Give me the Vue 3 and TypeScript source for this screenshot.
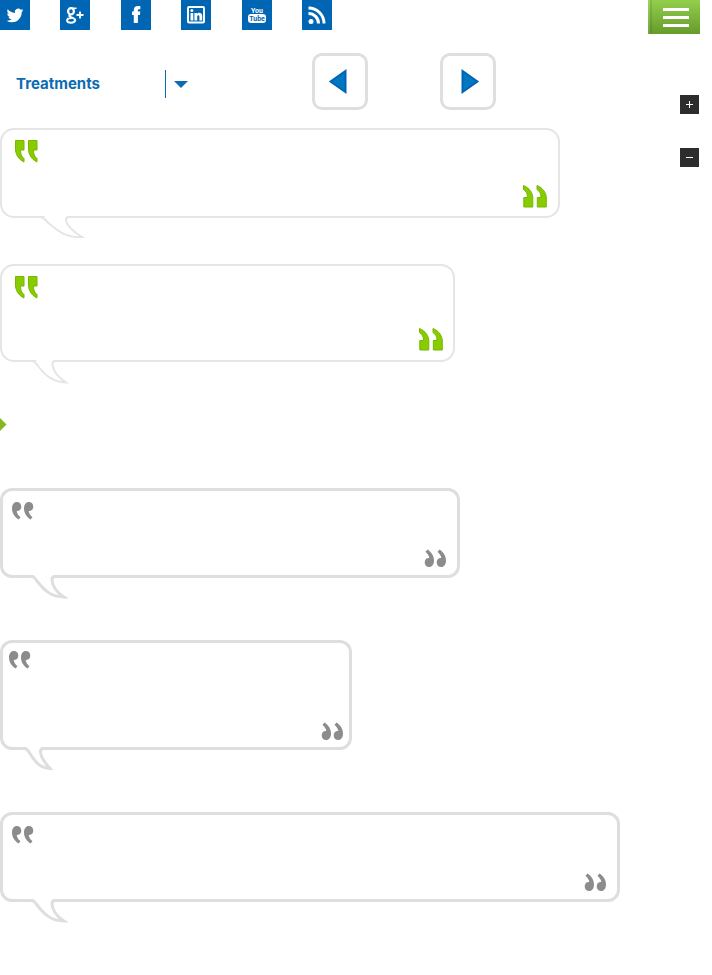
<script setup lang="ts">
import { ref } from 'vue'

interface Bubble {
  id: number
  tone: 'green' | 'grey'
  size: string
  tail: { view: string; width: number; gap: string; line: string }
}

const wideTail = {
  view: '0 0 46 26',
  width: 46,
  gap: 'M3 0H27V4H6Z',
  line: 'M0 3C4 3 5 6 9 9.500C18 17 26 24 42 23C33 18 26 10 26 6Q26 3 29 3'
}
const tail = {
  view: '0 0 38 26',
  width: 38,
  gap: 'M3 0H22V5H6Z',
  line: 'M-1 3C3 3 4 5 6 8C13 17 20 24 34 24.500C26 19 20.500 12 20.500 6Q20.500 3 23.500 3'
}
const greyTail = {
  view: '0 0 38 26',
  width: 38,
  gap: 'M3 0H23V5H6Z',
  line: 'M0 2.500C4 2.500 5 4 7 7C14 16 21 23 34 23C26 18 22 11 22 5.500Q22 2.500 25 2.500'
}
const smallTail = {
  view: '0 0 30 26',
  width: 30,
  gap: 'M2 0H17V5H5Z',
  line: 'M-1 2.500C3 2.500 4 4 5 6C11 16 16 22 26 22.500C21 17 16.500 11 16.500 5.500Q16.500 2.500 19.500 2.500'
}

const featured: Bubble[] = [
  { id: 1, tone: 'green', size: 'large', tail: wideTail },
  { id: 2, tone: 'green', size: 'medium', tail: tail }
]
const quotes: Bubble[] = [
  { id: 3, tone: 'grey', size: 'regular', tail: greyTail },
  { id: 4, tone: 'grey', size: 'small', tail: smallTail },
  { id: 5, tone: 'grey', size: 'full', tail: greyTail }
]
const groups = [featured, quotes]
const category = ref('Treatments')
</script>

<template>
  <div class="page">
    <main class="main">
      <nav class="social" aria-label="Social">
        <a href="#" aria-label="Twitter">
          <svg viewBox="0 0 30 30"><path transform="translate(6.600 7.100) scale(.7)" d="M23.954 4.569a10 10 0 0 1-2.825.775 4.958 4.958 0 0 0 2.163-2.723c-.951.555-2.005.959-3.127 1.184a4.92 4.92 0 0 0-8.384 4.482C7.691 8.094 4.066 6.13 1.64 3.161a4.822 4.822 0 0 0-.666 2.475c0 1.71.87 3.213 2.188 4.096a4.904 4.904 0 0 1-2.228-.616v.061a4.923 4.923 0 0 0 3.946 4.827 4.996 4.996 0 0 1-2.212.085 4.937 4.937 0 0 0 4.604 3.417 9.868 9.868 0 0 1-6.102 2.105c-.39 0-.779-.023-1.17-.067a13.995 13.995 0 0 0 7.557 2.209c9.054 0 13.999-7.496 13.999-13.986 0-.209 0-.42-.015-.63a9.936 9.936 0 0 0 2.46-2.548z" /></svg>
        </a>
        <a href="#" aria-label="Google Plus">
          <svg viewBox="0 0 30 30">
            <g class="line">
              <ellipse cx="11" cy="11.300" rx="2.900" ry="3.200" stroke-width="2.200" />
              <path d="M11 8.200H16.500M13 9.800L14.500 8" stroke-width="1.600" />
              <path d="M10.500 14.600C8.500 15.500 9 16.500 11 17.200C14 18.200 15.400 18.700 15.200 20.200C15 22 13 22.700 11 22.700C8.500 22.700 6.900 21.800 7.100 20.300C7.300 18.800 9 18 11.500 18" stroke-width="2" />
              <path d="M16.500 15H23.500M20 11.500V18.500" stroke-width="1.800" />
            </g>
          </svg>
        </a>
        <a href="#" aria-label="Facebook">
          <svg viewBox="0 0 30 30"><path d="M12.800 23V15H11V11.500H12.800V10C12.800 7.300 14.300 6 17 6H19.300V9.300H18C17.100 9.300 16.900 9.700 16.900 10.500V11.500H19.300L19 15H16.900V23Z" /></svg>
        </a>
        <a href="#" aria-label="LinkedIn">
          <svg viewBox="0 0 30 30">
            <rect class="line" x="7" y="7" width="16" height="15.500" rx="1" stroke-width="2" />
            <circle cx="10.900" cy="10.600" r="1.500" />
            <path d="M9.500 12.900H12.300V20.500H9.500ZM13.400 12.900H16V14C17 12.300 21.200 12.100 21.200 16V20.500H18.400V16.700C18.400 14.700 16.200 14.700 16.200 16.700V20.500H13.400Z" />
          </svg>
        </a>
        <a href="#" aria-label="YouTube">
          <svg viewBox="0 0 30 30">
            <text class="tube" x="15" y="13" text-anchor="middle">You</text>
            <rect x="6" y="14" width="18" height="9" rx="3" />
            <text class="tube tube-blue" x="15" y="21" text-anchor="middle">Tube</text>
          </svg>
        </a>
        <a href="#" aria-label="RSS">
          <svg viewBox="0 0 30 30">
            <circle cx="9" cy="21.500" r="2.500" />
            <path class="line" d="M6.500 13.500A10 10 0 0 1 16.500 23.500M6.500 8A15.500 15.500 0 0 1 22 23.500" stroke-width="3" />
          </svg>
        </a>
      </nav>

      <div class="toolbar">
        <div class="picker">
          <select v-model="category" aria-label="Category">
            <option>Treatments</option>
          </select>
          <svg class="caret" viewBox="0 0 14 7"><path d="M0 0H14L7 7Z" /></svg>
        </div>
        <button class="step prev" type="button" aria-label="Previous">
          <svg viewBox="0 0 20 27"><path d="M2.500 13.500L17.500 3V24Z" /></svg>
        </button>
        <button class="step next" type="button" aria-label="Next">
          <svg viewBox="0 0 20 27"><path d="M17.500 13.500L2.500 3V24Z" /></svg>
        </button>
      </div>

      <template v-for="(group, index) in groups" :key="index">
        <svg v-if="index === 1" class="marker" viewBox="0 0 7 13"><path d="M0 0L6.500 6.500L0 13Z" /></svg>
        <blockquote v-for="b in group" :key="b.id" class="bubble" :class="[b.tone, b.size]">
          <svg v-if="b.tone === 'green'" class="mark" viewBox="0 0 24 24">
            <path d="M1.500 .5H10V10H6.500C6.500 14 7.500 16.500 10 18.500V22C4 19 1.500 14 1.500 9ZM14.500 .5H23V10H19.500C19.500 14 20.500 16.500 23 18.500V22C17 19 14.500 14 14.500 9Z" />
          </svg>
          <svg v-else class="mark" viewBox="0 0 22 18">
            <path d="M4.800 0C2 0 0 2.500 0 6.500C0 11 2.500 15 6.500 17.500L8.500 15.300C6 13 5 11 4.700 8.900C7.500 9.300 9.300 7.200 9.300 4.500C9.300 1.800 7.500 0 4.800 0ZM16.800 0C14 0 12 2.500 12 6.500C12 11 14.500 15 18.500 17.500L20.500 15.300C18 13 17 11 16.700 8.900C19.500 9.300 21.300 7.200 21.300 4.500C21.300 1.800 19.500 0 16.800 0Z" />
          </svg>
          <svg v-if="b.tone === 'green'" class="mark close" viewBox="0 0 24 24">
            <path d="M.5 1.500C6.500 4 9.800 9 9.800 14V23H.8V13.500H4.500C4.500 9.500 3.300 7.500 .5 5.500ZM14 1.500C20 4 23.300 9 23.300 14V23H14.300V13.500H18C18 9.500 16.800 7.500 14 5.500Z" />
          </svg>
          <svg v-else class="mark close" viewBox="0 0 22 18">
            <g transform="rotate(180 11 9)">
              <path d="M4.800 0C2 0 0 2.500 0 6.500C0 11 2.500 15 6.500 17.500L8.500 15.300C6 13 5 11 4.700 8.900C7.500 9.300 9.300 7.200 9.300 4.500C9.300 1.800 7.500 0 4.800 0ZM16.800 0C14 0 12 2.500 12 6.500C12 11 14.500 15 18.500 17.500L20.500 15.300C18 13 17 11 16.700 8.900C19.500 9.300 21.300 7.200 21.300 4.500C21.300 1.800 19.500 0 16.800 0Z" />
            </g>
          </svg>
          <svg class="tail" :viewBox="b.tail.view" :width="b.tail.width" height="26">
            <path class="gap" :d="b.tail.gap" />
            <path class="outline" :d="b.tail.line" />
          </svg>
        </blockquote>
      </template>
    </main>

    <aside class="side">
      <button class="menu" type="button" aria-label="Menu"><span /><span /><span /></button>
      <button class="zoom" type="button" aria-label="Expand">
        <svg viewBox="0 0 19 19"><path d="M6 9.500H13M9.500 6V13" /></svg>
      </button>
      <button class="zoom" type="button" aria-label="Collapse">
        <svg viewBox="0 0 19 19"><path d="M6 9.500H13" /></svg>
      </button>
    </aside>
  </div>
</template>

<style>
body {
  background: #fff;
}
</style>

<style scoped>
.page {
  display: flex;
  justify-content: space-between;
  padding-bottom: 73px;
  font-family: Inter, "Liberation Sans", sans-serif;
}
.page * {
  box-sizing: border-box;
}
svg {
  display: block;
}
button {
  padding: 0;
  border: 0;
  cursor: pointer;
}
.main {
  flex: 1;
  min-width: 0;
}
.social {
  display: flex;
  justify-content: space-between;
  max-width: 332px;
}
.social a {
  width: 30px;
  height: 30px;
  background: #0066b3;
}
.social svg {
  fill: #fff;
}
.social .line {
  fill: none;
  stroke: #fff;
}
.tube {
  font-family: Roboto, "Liberation Sans", sans-serif;
  font-size: 7px;
  font-weight: 700;
}
.social .tube-blue {
  fill: #0066b3;
}
.toolbar {
  display: flex;
  align-items: flex-start;
  gap: 72px;
  margin-top: 23px;
}
.picker {
  position: relative;
  width: 192px;
  margin: 17px 48px 0 0;
}
.picker select {
  display: block;
  width: 100%;
  height: 28px;
  padding: 0 16px;
  border: 0;
  appearance: none;
  background: linear-gradient(#0b6cb0, #0b6cb0) 165px 0 / 1px 100% no-repeat;
  color: #0b6cb0;
  font: 700 15px/28px Inter, "Liberation Sans", sans-serif;
}
.caret {
  position: absolute;
  right: 4px;
  top: 11px;
  width: 14px;
  fill: #0b6cb0;
  pointer-events: none;
}
.step {
  display: grid;
  place-items: center;
  width: 56px;
  height: 57px;
  border: 3px solid #dfdfdf;
  border-radius: 10px;
  background: #fff;
}
.prev {
  padding-right: 4px;
}
.next {
  padding-left: 4px;
}
.step svg {
  width: 20px;
  fill: #0077bf;
  stroke: #0066b3;
  stroke-width: 2;
}
.bubble {
  position: relative;
  display: flex;
  justify-content: space-between;
  width: 100%;
  min-height: 90px;
  margin: 62px 0 0;
  padding: 11px 11px 8px 9px;
  border: 3px solid #dedede;
  border-radius: 12px;
  background: #fff;
}
.green {
  padding: 10px 11px 8px 12px;
  border: 2px solid #e5e5e5;
  border-radius: 14px;
}
.large {
  max-width: 560px;
  margin-top: 18px;
}
.medium {
  max-width: 455px;
  min-height: 98px;
  margin-top: 46px;
  padding: 10px 10px 9px 12px;
}
.regular {
  max-width: 460px;
  margin-top: 57px;
}
.small {
  max-width: 352px;
  min-height: 110px;
  padding: 8px 6px 7px 6px;
}
.full {
  max-width: 620px;
}
.mark {
  width: 22px;
  height: 18px;
  fill: #8c8c8c;
}
.green .mark {
  width: 24px;
  height: 24px;
  fill: #8c0;
  stroke: #76b800;
}
.mark.close {
  align-self: flex-end;
}
.tail {
  position: absolute;
  top: 100%;
  left: 27px;
  margin-top: -1px;
}
.green .tail {
  margin-top: -2px;
}
.large .tail {
  left: 38px;
}
.medium .tail {
  left: 30px;
}
.small .tail {
  left: 21px;
}
.gap {
  fill: #fff;
}
.outline {
  fill: #fff;
  stroke: #dedede;
  stroke-width: 3;
}
.green .outline {
  stroke: #e5e5e5;
  stroke-width: 2;
}
.marker {
  width: 7px;
  height: 13px;
  margin-top: 56px;
  fill: #84b81c;
}
.side {
  display: flex;
  flex-direction: column;
  align-items: flex-end;
  padding-right: 12px;
}
.menu {
  display: flex;
  flex-direction: column;
  align-items: center;
  justify-content: center;
  gap: 5px;
  width: 52px;
  height: 34px;
  margin-bottom: 27px;
  padding: 0 0 0 4px;
  background:
    linear-gradient(90deg, #ffffff18 2px, #00000018 2px, #00000018 4px, transparent 4px),
    linear-gradient(#92cf4c, #669b2c);
}
.menu span {
  width: 26px;
  height: 3px;
  background: #fff;
}
.zoom {
  width: 19px;
  height: 19px;
  margin: 34px 1px 0 0;
  background: #2d2d2d;
}
.zoom svg {
  stroke: #fff;
}
</style>
